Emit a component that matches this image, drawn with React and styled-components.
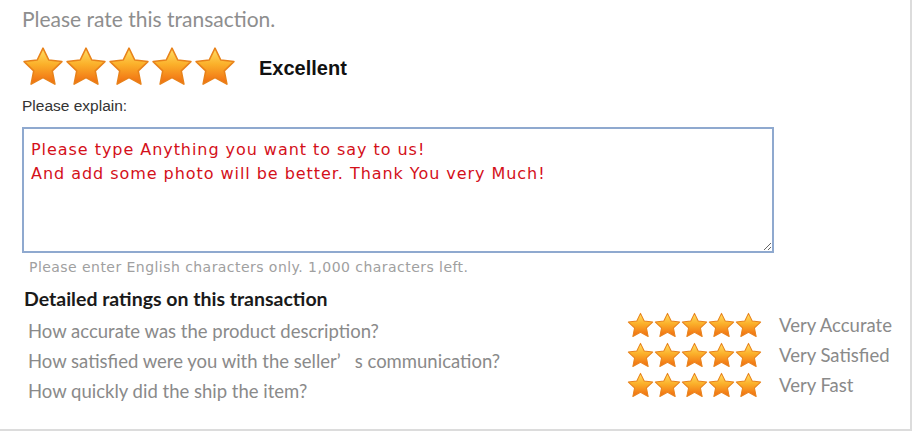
import React, { useId } from 'react'
import styled, { createGlobalStyle } from 'styled-components'

const GlobalStyle = createGlobalStyle`
    html, body {
        margin: 0;
        padding: 0;
        background: #fff;
    }
`

const Star = ({ size }) => {
    const id = useId()
    return (
        <svg width={size} height={size} viewBox="0 0 24 24">
            <defs>
                <linearGradient id={id} x1="0" y1="0" x2="0" y2="1">
                    <stop offset="0" stopColor="#ffe066" />
                    <stop offset="0.45" stopColor="#fbb02a" />
                    <stop offset="1" stopColor="#f06a10" />
                </linearGradient>
            </defs>
            <polygon
                points="12,1.2 15.3,8 22.8,8.9 17.3,14.2 18.8,21.8 12,18.1 5.2,21.8 6.7,14.2 1.2,8.9 8.7,8"
                fill={`url(#${id})`}
                stroke="#e8821a"
                strokeWidth="0.9"
                strokeLinejoin="round"
            />
        </svg>
    )
}

const Stars = ({ size, gap }) => (
    <StarGroup gap={gap}>
        {[0, 1, 2, 3, 4].map(i => <Star key={i} size={size} />)}
    </StarGroup>
)

const questions = [
    ['How accurate was the product description?', 'Very Accurate'],
    ['How satisfied were you with the seller’\u2002 s communication?', 'Very Satisfied'],
    ['How quickly did the ship the item?', 'Very Fast'],
]

const App = () => {
    return (
        <>
            <GlobalStyle />
            <Panel>
                <Title>Please rate this transaction.</Title>
                <RatingRow>
                    <Stars size={42} gap={1} />
                    <RatingWord>Excellent</RatingWord>
                </RatingRow>
                <Label>Please explain:</Label>
                <Comment
                    readOnly
                    defaultValue={'Please type Anything you want to say to us!\nAnd add some photo will be better. Thank You very Much!'}
                />
                <Hint>Please enter English characters only. 1,000 characters left.</Hint>
                <SubTitle>Detailed ratings on this transaction</SubTitle>
                <Details>
                    <Questions>
                        {questions.map(([q]) => <Question key={q}>{q}</Question>)}
                    </Questions>
                    <Scores>
                        {questions.map(([q, a]) => (
                            <Score key={q}>
                                <Stars size={27} gap={0} />
                                <ScoreWord>{a}</ScoreWord>
                            </Score>
                        ))}
                    </Scores>
                </Details>
            </Panel>
        </>
    )
}

const Panel = styled.div`
    width: 912px;
    height: 431px;
    box-sizing: border-box;
    padding: 6px 0 0 22px;
    border-right: 2px solid #dcdcdc;
    border-bottom: 2px solid #dcdcdc;
    display: flex;
    flex-direction: column;
    align-items: flex-start;
`

const Title = styled.div`
    font-family: Lato, sans-serif;
    font-size: 21px;
    line-height: 26px;
    color: #8e8e8e;
`

const RatingRow = styled.div`
    margin-top: 14px;
    display: flex;
    align-items: center;
`

const StarGroup = styled.div`
    display: flex;
    gap: ${props => props.gap}px;
`

const RatingWord = styled.span`
    margin-left: 23px;
    margin-top: 3px;
    font-family: "Liberation Sans", Arial, sans-serif;
    font-weight: bold;
    font-size: 20px;
    color: #111;
`

const Label = styled.div`
    margin-top: 9px;
    font-family: "Liberation Sans", Arial, sans-serif;
    font-size: 15.5px;
    line-height: 18px;
    color: #333;
`

const Comment = styled.textarea`
    margin-top: 12px;
    width: 752px;
    height: 126px;
    box-sizing: border-box;
    padding: 9px 7px;
    border: 2px solid #8fa9cf;
    resize: both;
    font-family: "DejaVu Sans", Verdana, sans-serif;
    font-size: 16px;
    letter-spacing: 0.95px;
    line-height: 24px;
    color: #d4101a;
    outline: none;
`

const Hint = styled.div`
    margin-top: 6px;
    padding-left: 7px;
    font-family: "DejaVu Sans", Tahoma, sans-serif;
    font-size: 14px;
    letter-spacing: 0.45px;
    line-height: 16px;
    color: #a0a0a0;
`

const SubTitle = styled.div`
    margin-top: 13px;
    padding-left: 2px;
    font-family: Lato, sans-serif;
    font-weight: bold;
    font-size: 19.5px;
    line-height: 22px;
    color: #1a1a1a;
`

const Details = styled.div`
    display: flex;
`

const Questions = styled.div`
    width: 599px;
    padding: 6px 0 0 6px;
    display: flex;
    flex-direction: column;
`

const Question = styled.div`
    font-family: Lato, sans-serif;
    font-size: 18.5px;
    line-height: 30px;
    color: #8a8a8a;
    white-space: nowrap;
`

const Scores = styled.div`
    display: flex;
    flex-direction: column;
`

const Score = styled.div`
    height: 30px;
    display: flex;
    align-items: center;
`

const ScoreWord = styled.span`
    margin-left: 17px;
    font-family: Lato, sans-serif;
    font-size: 18.5px;
    color: #8a8a8a;
    white-space: nowrap;
`

export default App
